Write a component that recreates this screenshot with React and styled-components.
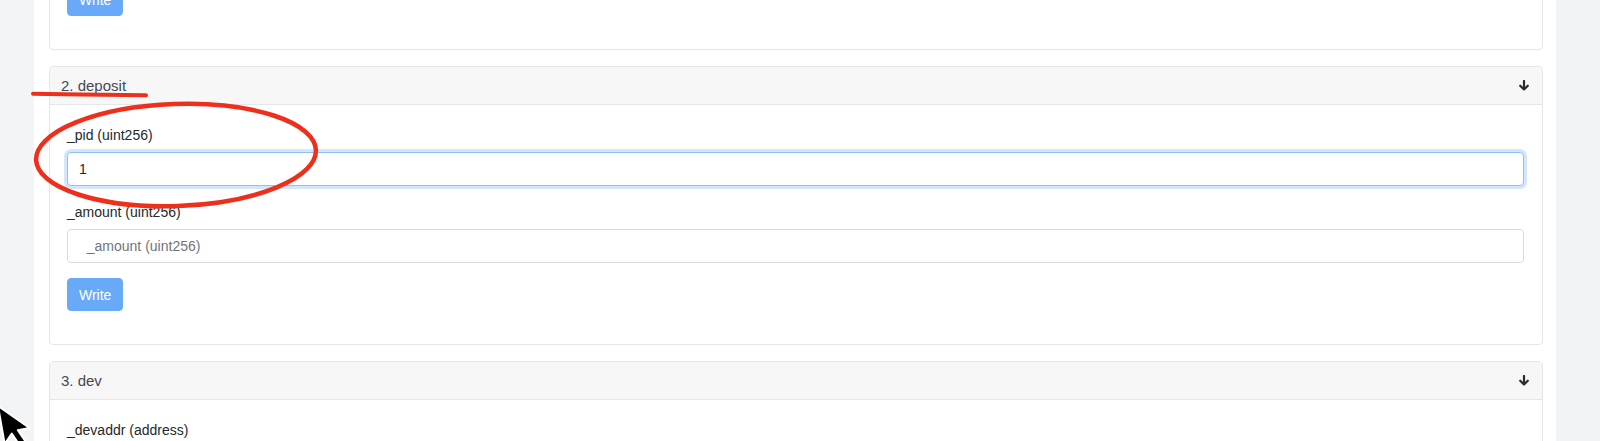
import React from "react";
import styled, { createGlobalStyle, css } from "styled-components";

const GlobalStyle = createGlobalStyle`
  html, body { margin: 0; padding: 0; overflow: hidden; background: #fff; }
  body { font-family: "Liberation Sans", Arial, Helvetica, sans-serif; }
  * { box-sizing: border-box; }
`;

const Page = styled.div`
  position: relative;
  display: flex;
  width: 1600px;
  height: 441px;
  overflow: hidden;
`;

const Rail = styled.div`
  flex: 0 0 ${(p) => p.$w}px;
  background: ${(p) => p.$bg};
`;

const Main = styled.main`
  flex: 1;
  background: #fff;
  padding: 0 13px 0 15px;
`;

const CardList = styled.div`
  display: flex;
  flex-direction: column;
  gap: 16px;
  margin-top: -152px;
`;

const Card = styled.section`
  border: 1px solid #e4e6e9;
  border-radius: 4px;
  background: #fff;
  overflow: hidden;
`;

const CardHeader = styled.div`
  display: flex;
  align-items: center;
  justify-content: space-between;
  padding: 8px 13px 8px 11px;
  background: #f7f7f8;
  border-bottom: 1px solid #e4e6e9;
  font-size: 15px;
  line-height: 21px;
  color: #45494f;
`;

const CardBody = styled.div`
  padding: 20px 18px 33px 17px;
`;

const Fields = styled.div`
  display: flex;
  flex-direction: column;
  gap: 16px;
`;

const Field = styled.div`
  display: flex;
  flex-direction: column;
`;

const Label = styled.label`
  font-size: 14px;
  line-height: 20px;
  color: #24282c;
  margin-bottom: 7px;
`;

const Input = styled.input`
  width: 100%;
  height: 34px;
  padding: 0 11px;
  border: 1px solid #d8dbdf;
  border-radius: 4px;
  font-family: inherit;
  font-size: 14px;
  color: #24282c;
  background: #fff;
  outline: none;
  white-space: pre;
  &::placeholder {
    color: #6f757b;
    white-space: pre;
  }
  ${(p) =>
    p.$focused &&
    css`
      border-color: #8fc0f7;
      box-shadow: 0 0 0 3px rgba(80, 155, 245, 0.25);
    `}
`;

const WriteButton = styled.button`
  align-self: flex-start;
  margin-top: 15px;
  height: 33px;
  padding: 0 11px;
  border: 1px solid #69aaf8;
  border-radius: 4px;
  background: #69aaf8;
  color: #fff;
  font-family: inherit;
  font-size: 14px;
  line-height: 1;
  cursor: default;
`;

const Form = styled.div`
  display: flex;
  flex-direction: column;
`;

const Overlay = styled.svg`
  position: absolute;
  left: 0;
  top: 0;
  pointer-events: none;
`;

const ArrowDown = () => (
  <svg width="10" height="11" viewBox="0 0 10 11" aria-hidden="true">
    <path
      d="M5 1 V9.5 M1.2 5.7 L5 9.5 L8.8 5.7"
      fill="none"
      stroke="#2b2b2b"
      strokeWidth="2.2"
      strokeLinecap="round"
      strokeLinejoin="round"
    />
  </svg>
);

const functions = [
  { title: "1. add", fields: [{ name: "_allocPoint (uint256)" }] },
  {
    title: "2. deposit",
    fields: [
      { name: "_pid (uint256)", value: "1", focused: true },
      { name: "_amount (uint256)" },
    ],
  },
  {
    title: "3. dev",
    fields: [{ name: "_devaddr (address)" }],
  },
];

export default function App() {
  return (
    <>
      <GlobalStyle />
      <Page>
        <Rail $w={34} $bg="#f3f4f6" />
        <Main>
          <CardList>
            {functions.map((fn) => (
              <Card key={fn.title}>
                <CardHeader>
                  <span>{fn.title}</span>
                  <ArrowDown />
                </CardHeader>
                <CardBody>
                  <Form>
                    <Fields>
                      {fn.fields.map((f) => (
                        <Field key={f.name}>
                          <Label>{f.name}</Label>
                          <Input
                            $focused={f.focused}
                            defaultValue={f.value}
                            placeholder={f.value ? "" : "  " + f.name}
                          />
                        </Field>
                      ))}
                    </Fields>
                    <WriteButton>Write</WriteButton>
                  </Form>
                </CardBody>
              </Card>
            ))}
          </CardList>
        </Main>
        <Rail $w={44} $bg="#f2f3f5" />
        <Overlay width="1600" height="441" viewBox="0 0 1600 441">
          <path
            d="M33 93.8 C70 94.4 110 95 146 95.2"
            fill="none"
            stroke="#ee2f1b"
            strokeWidth="4"
            strokeLinecap="round"
          />
          <ellipse
            cx="176"
            cy="155"
            rx="140"
            ry="51"
            transform="rotate(-2 176 155)"
            fill="none"
            stroke="#ee2f1b"
            strokeWidth="4.5"
          />
          <g transform="translate(-2 406) rotate(-10) scale(1.6)">
            <path
              d="M0 0 L0 24 L5.5 18.5 L9.5 27.5 L13.5 25.8 L9.6 17 L17 17 Z"
              fill="#000"
              stroke="#fff"
              strokeWidth="1.2"
              strokeLinejoin="round"
            />
          </g>
        </Overlay>
      </Page>
    </>
  );
}
